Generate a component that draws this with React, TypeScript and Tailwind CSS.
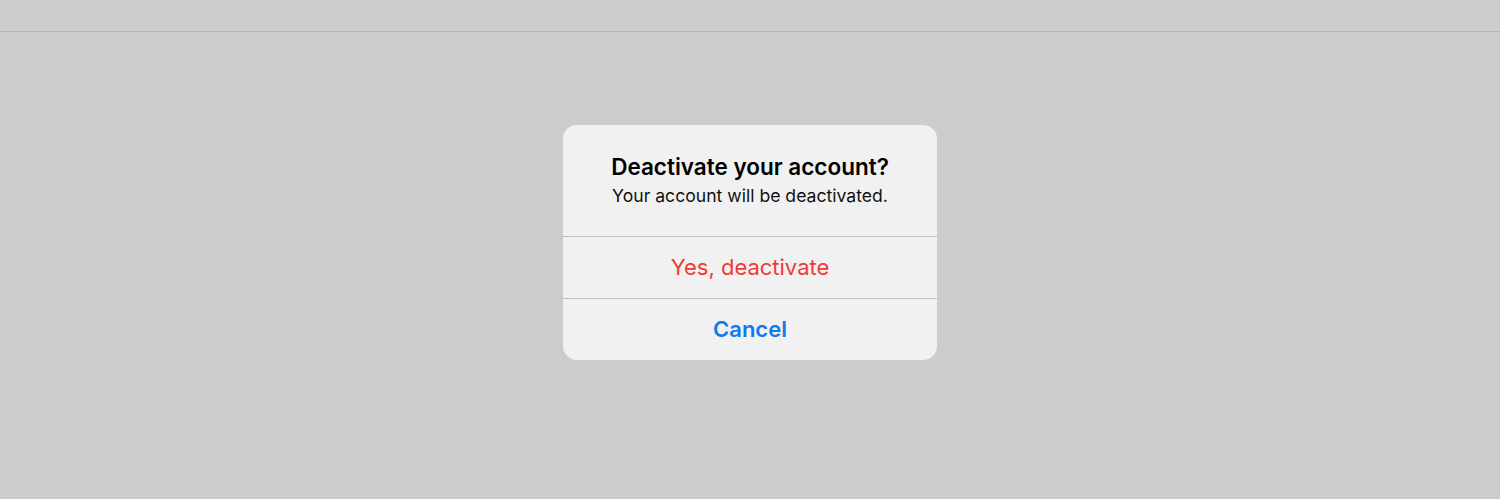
import React from 'react';

const App: React.FC = () => {
    return (
        <div className="min-h-[499px] w-full bg-[#cccccc] flex flex-col" style={{ fontFamily: 'Inter, "Noto Sans", sans-serif' }}>
            <div className="h-[32px] border-b border-[#b3b3b8]" />
            <div className="flex justify-center pt-[93px]">
                <div className="w-[374px] rounded-[14px] bg-[#f1f1f1] overflow-hidden">
                    <div className="h-[112px] flex flex-col items-center pt-[28px] border-b border-[#c0c0c0]">
                        <h2 className="text-[22.5px] leading-[28px] font-semibold text-black">Deactivate your account?</h2>
                        <p className="text-[17.6px] leading-[24px] text-[#111] mt-[3px]">Your account will be deactivated.</p>
                    </div>
                    <button className="w-full h-[62px] flex items-center justify-center text-[22px] text-[#ef3b36] border-b border-[#c0c0c0]">
                        Yes, deactivate
                    </button>
                    <button className="w-full h-[61px] flex items-center justify-center text-[22px] font-semibold text-[#0f7aef]">
                        Cancel
                    </button>
                </div>
            </div>
        </div>
    );
};

export default App;
